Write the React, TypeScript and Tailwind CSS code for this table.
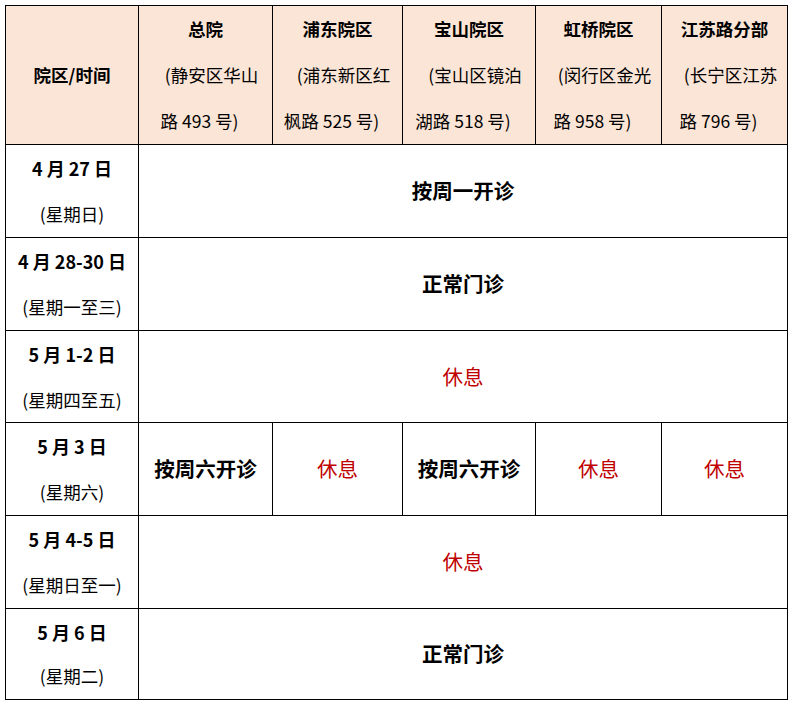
import React from "react";

type Cell = { text: string; rest?: boolean };

type Row = {
  date: string;
  week: string;
  h: string;
  lh: string;
  cells: Cell[] | Cell;
};

const sites = [
  { name: "总院", a: "(静安区华山", b: "路 493 号)" },
  { name: "浦东院区", a: "(浦东新区红", b: "枫路 525 号)" },
  { name: "宝山院区", a: "(宝山区镜泊", b: "湖路 518 号)" },
  { name: "虹桥院区", a: "(闵行区金光", b: "路 958 号)" },
  { name: "江苏路分部", a: "(长宁区江苏", b: "路 796 号)" },
];

const rows: Row[] = [
  { date: "4 月 27 日", week: "(星期日)", h: "h-[93px]", lh: "leading-[46px]", cells: { text: "按周一开诊" } },
  { date: "4 月 28-30 日", week: "(星期一至三)", h: "h-[93px]", lh: "leading-[46px]", cells: { text: "正常门诊" } },
  { date: "5 月 1-2 日", week: "(星期四至五)", h: "h-[92px]", lh: "leading-[45px]", cells: { text: "休息", rest: true } },
  {
    date: "5 月 3 日",
    week: "(星期六)",
    h: "h-[93px]",
    lh: "leading-[46px]",
    cells: [
      { text: "按周六开诊" },
      { text: "休息", rest: true },
      { text: "按周六开诊" },
      { text: "休息", rest: true },
      { text: "休息", rest: true },
    ],
  },
  { date: "5 月 4-5 日", week: "(星期日至一)", h: "h-[93px]", lh: "leading-[46px]", cells: { text: "休息", rest: true } },
  { date: "5 月 6 日", week: "(星期二)", h: "h-[91px]", lh: "leading-[44px]", cells: { text: "正常门诊" } },
];

const cellText = (c: Cell) =>
  c.rest ? (
    <span className="text-[20.5px] font-normal text-[#c00000]">{c.text}</span>
  ) : (
    <span className="text-[20.5px] font-bold text-black">{c.text}</span>
  );

const App: React.FC = () => {
  return (
    <div
      className="min-h-screen bg-white pl-[5px] pt-[5px] text-[17.5px] leading-[46px] text-black"
      style={{ fontFamily: '"Noto Sans CJK SC", "Noto Sans", sans-serif' }}
    >
      <table className="table-fixed border-collapse w-[782px]">
        <colgroup>
          <col className="w-[133px]" />
          <col className="w-[134px]" />
          <col className="w-[130px]" />
          <col className="w-[133px]" />
          <col className="w-[126px]" />
          <col className="w-[126px]" />
        </colgroup>
        <thead>
          <tr className="h-[139px] bg-[#fbe5d6]">
            <th className="border border-black p-0 text-center align-middle font-bold">
              院区/时间
            </th>
            {sites.map((s) => (
              <th key={s.name} className="border border-black p-0 text-center align-middle">
                <div className="font-bold">{s.name}</div>
                <div className="pl-3 font-normal">{s.a}</div>
                <div className="pr-3 font-normal">{s.b}</div>
              </th>
            ))}
          </tr>
        </thead>
        <tbody>
          {rows.map((r) => (
            <tr key={r.date} className={r.h}>
              <td className={`border border-black p-0 text-center align-middle ${r.lh}`}>
                <div className="text-[18px] font-bold">{r.date}</div>
                <div>{r.week}</div>
              </td>
              {Array.isArray(r.cells) ? (
                r.cells.map((c, i) => (
                  <td key={i} className="border border-black p-0 text-center align-middle">
                    {cellText(c)}
                  </td>
                ))
              ) : (
                <td colSpan={5} className="border border-black p-0 text-center align-middle">
                  {cellText(r.cells)}
                </td>
              )}
            </tr>
          ))}
        </tbody>
      </table>
    </div>
  );
};

export default App;
